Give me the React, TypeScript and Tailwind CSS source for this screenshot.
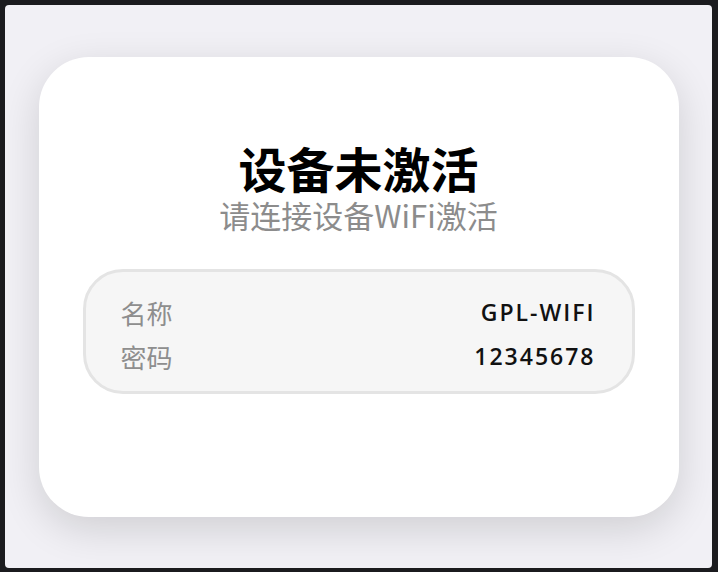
export default function App() {
  return (
    <div className="h-[572px] w-full bg-[#1b1b1e] pt-[5px] pl-[5px] pr-[6px] pb-[4px]">
      <div className="flex h-full w-full items-center justify-center rounded-[4px] bg-[#f1f0f5]">
        <div className="flex h-[460px] w-[640px] flex-col items-center rounded-[50px] bg-white pt-[86px] shadow-[0_12px_40px_rgba(0,0,0,0.14)]">
          <h1 className="text-[48px] font-bold leading-[48px] text-black [font-family:'Noto_Sans_CJK_SC',sans-serif]">
            设备未激活
          </h1>
          <p className="mt-[5px] text-[31px] leading-[38px] text-[#8c8c8c] [font-family:'Noto_Sans_CJK_SC',sans-serif]">
            请连接设备WiFi激活
          </p>
          <div className="mt-[35px] w-[552px] rounded-[40px] border-[3px] border-[#e4e4e4] bg-[#f6f6f6] pl-[35px] pr-[36px] pt-[19px] pb-[12px]">
            {[
              ["名称", "GPL-WIFI"],
              ["密码", "12345678"],
            ].map(([label, value]) => (
              <div key={label} className="flex h-[44px] items-center justify-between">
                <span className="text-[26px] text-[#8e8e8e] [font-family:'Noto_Sans_CJK_SC',sans-serif]">
                  {label}
                </span>
                <span className="text-[23px] font-semibold tracking-[2px] text-[#111] [font-family:'Open_Sans',sans-serif]">
                  {value}
                </span>
              </div>
            ))}
          </div>
        </div>
      </div>
    </div>
  );
}
